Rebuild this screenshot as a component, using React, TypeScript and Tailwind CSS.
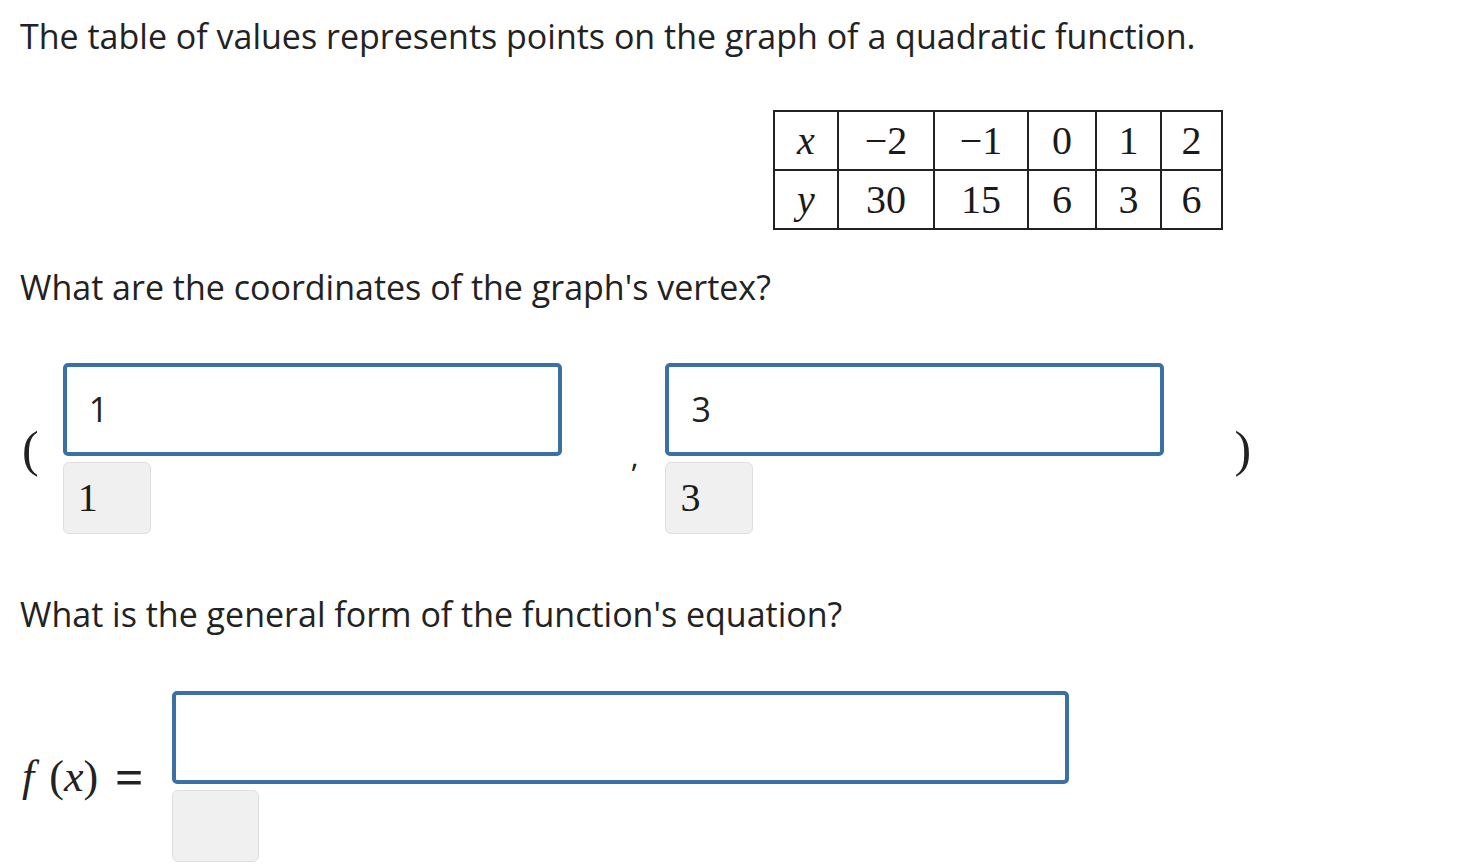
const sans = "font-['Open_Sans',sans-serif]";
const serif = "font-['Liberation_Serif','Times_New_Roman',serif]";

const AnswerBox = ({
  value,
  preview,
  width,
}: {
  value: string;
  preview: string;
  width: string;
}) => {
  return (
    <div className="flex flex-col gap-[6px]">
      <div
        className={`${width} h-[93px] border-[4px] border-[#3a70a6] rounded-[5px] bg-white flex items-center pl-[22px] ${sans} text-[34px] text-[#222]`}
      >
        {value}
      </div>
      <div
        className={`w-[88px] h-[72px] rounded-[6px] border border-[#dedede] bg-[#f0f0f0] flex items-center pl-[14px] ${serif} text-[40px] text-[#1a1a1a]`}
      >
        {preview}
      </div>
    </div>
  );
};

const xs = ["x", "\u22122", "\u22121", "0", "1", "2"];
const ys = ["y", "30", "15", "6", "3", "6"];
const widths = ["w-[64px]", "w-[96px]", "w-[94px]", "w-[68px]", "w-[65px]", "w-[61px]"];

export default function App() {
  return (
    <div className="min-h-screen bg-white text-[#222] pl-[20px] pt-[14px]">
      <p className={`${sans} text-[34px] leading-[44px]`}>
        The table of values represents points on the graph of a quadratic function.
      </p>

      <div className="mt-[52px] ml-[753px]">
        <table className={`border-collapse ${serif} text-[40px] text-[#1a1a1a]`}>
          <tbody>
            {[xs, ys].map((row, r) => (
              <tr key={r} className="h-[59px]">
                {row.map((cell, i) => (
                  <td
                    key={i}
                    className={`${widths[i]} border-2 border-[#222] text-center p-0 leading-none ${i === 0 ? "italic" : ""}`}
                  >
                    {cell}
                  </td>
                ))}
              </tr>
            ))}
          </tbody>
        </table>
      </div>

      <p className={`${sans} text-[34px] leading-[44px] mt-[35px]`}>
        What are the coordinates of the graph's vertex?
      </p>

      <div className="flex items-center mt-[54px]">
        <span className={`${serif} text-[50px] leading-none ml-[2px] mr-[24px]`}>(</span>
        <AnswerBox value="1" preview="1" width="w-[499px]" />
        <span className={`${sans} text-[30px] leading-none ml-[69px] mr-[27px] mt-[14px]`}>,</span>
        <AnswerBox value="3" preview="3" width="w-[499px]" />
        <span className={`${serif} text-[50px] leading-none ml-[70px]`}>)</span>
      </div>

      <p className={`${sans} text-[34px] leading-[44px] mt-[58px]`}>
        What is the general form of the function's equation?
      </p>

      <div className="flex items-center mt-[55px]">
        <div className="w-[152px] flex items-center">
          <span className={`${serif} text-[44px] leading-none whitespace-nowrap flex items-center ml-[2px]`}>
            <span className="italic">f</span>
            <span className="ml-[15px]">(</span>
            <span className="italic">x</span>
            <span>)</span>
            <span className="ml-[17px] text-[50px] font-bold">=</span>
          </span>
        </div>
        <div className="flex flex-col gap-[6px]">
          <div className="w-[897px] h-[93px] border-[4px] border-[#3a70a6] rounded-[5px] bg-white" />
          <div className="w-[87px] h-[72px] rounded-[6px] border border-[#dedede] bg-[#f0f0f0]" />
        </div>
      </div>
    </div>
  );
}
